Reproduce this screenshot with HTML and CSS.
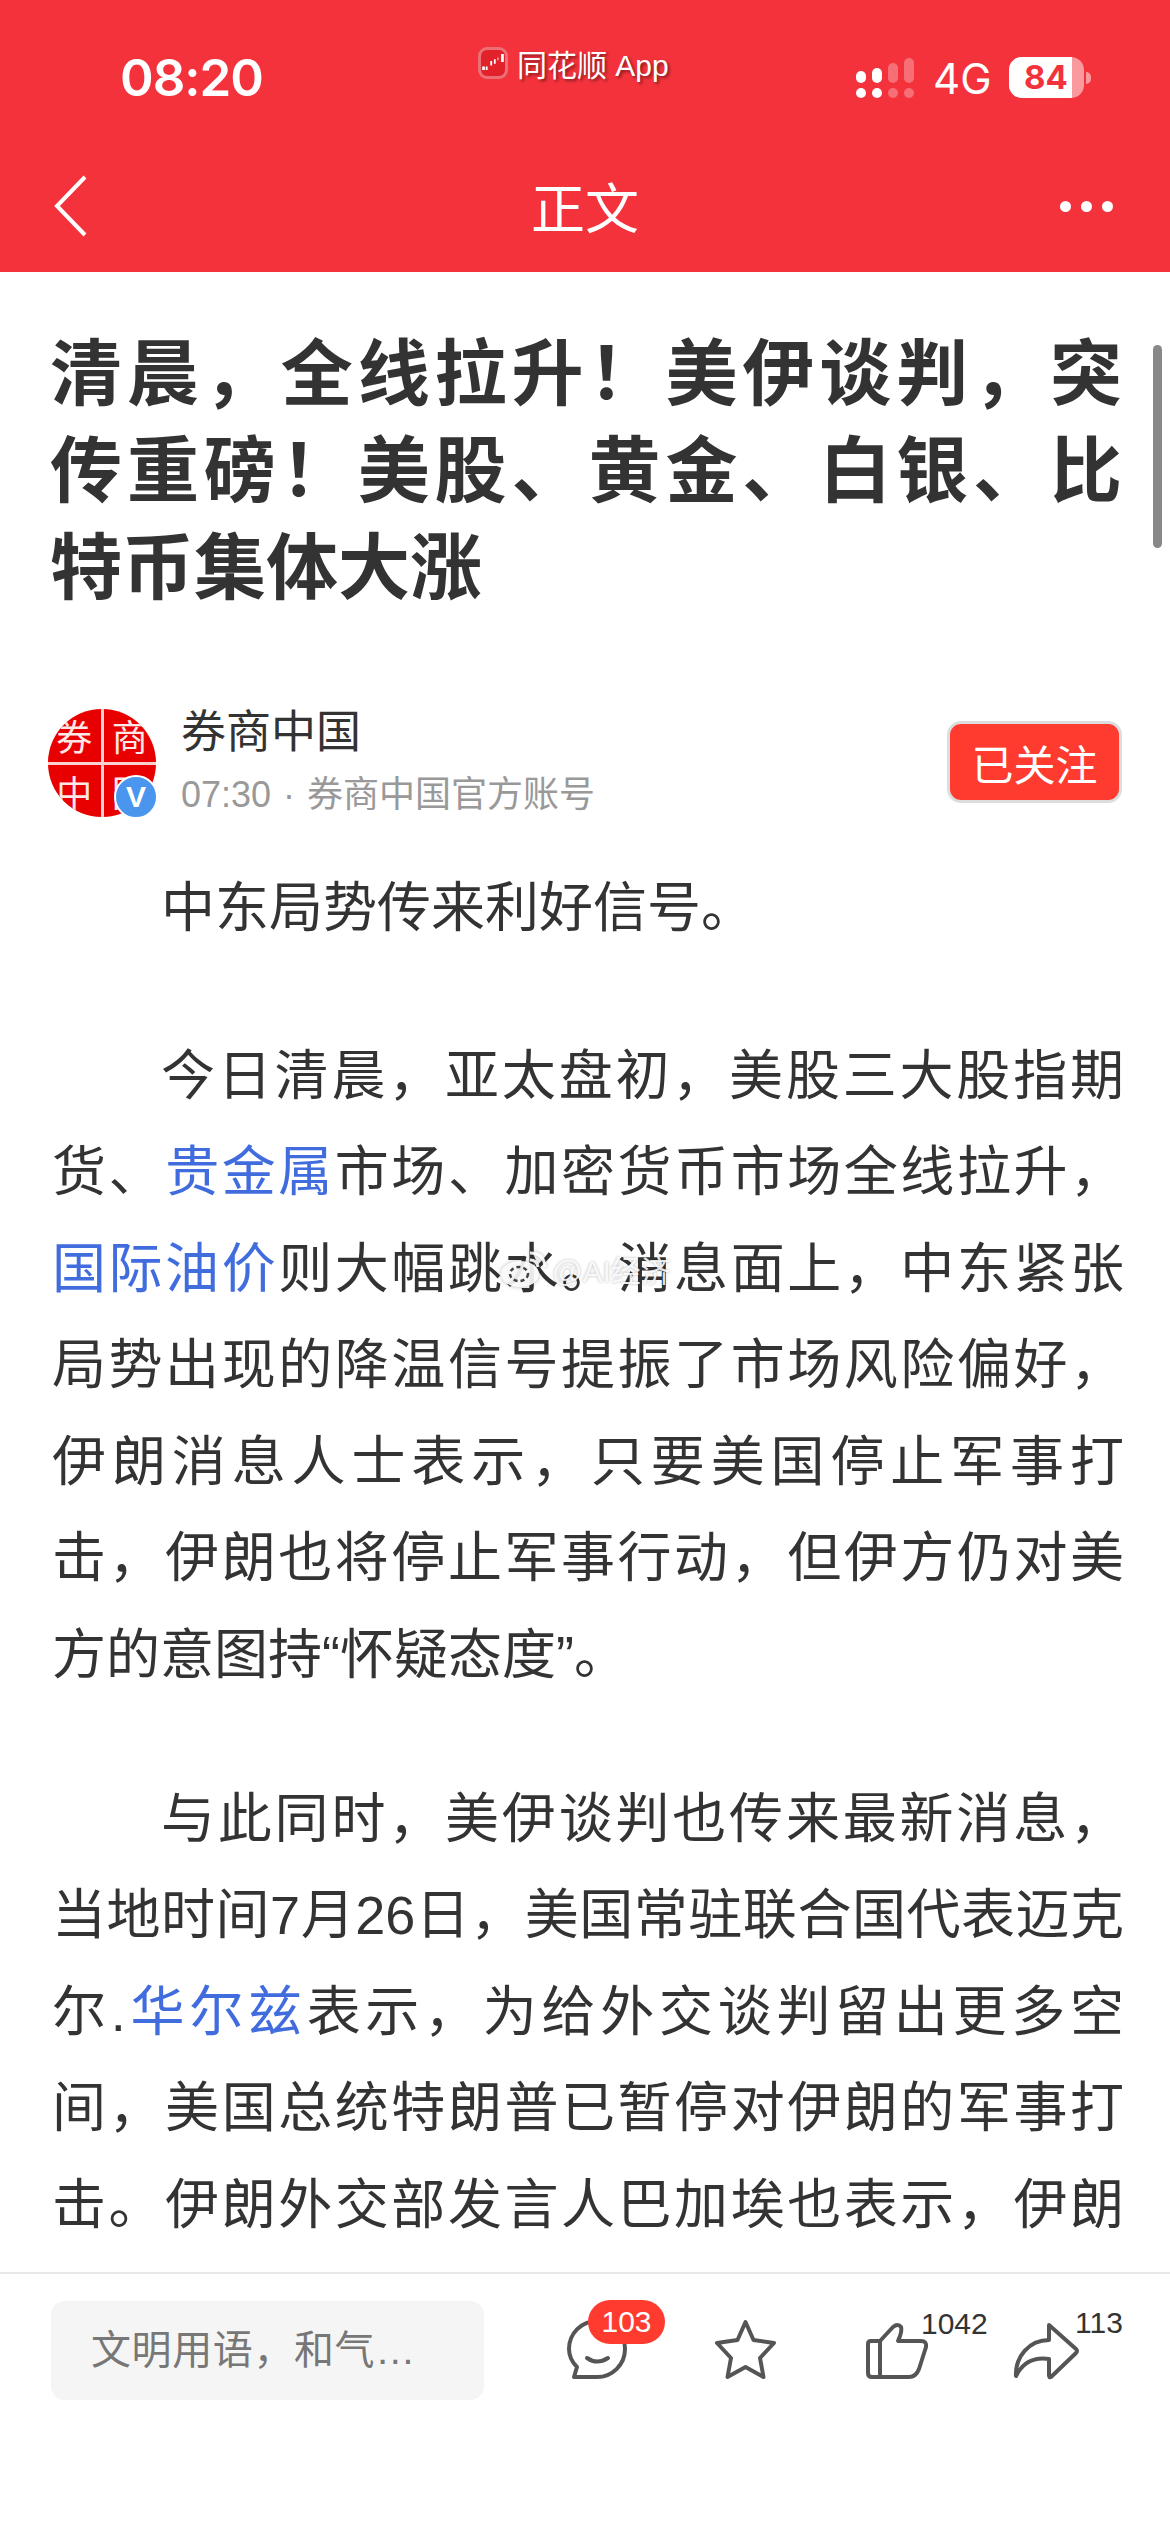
FILE: index.html
```html
<!DOCTYPE html>
<html lang="zh-CN">

<head>
    <meta charset="UTF-8">
    <meta name="viewport" content="width=device-width, initial-scale=1.0">
    <title>正文</title>
    <link rel="stylesheet" href="styles.css">
</head>

<body>
    <div id="page">
        <div id="header">
            <div id="status">
                <div id="time">08:20</div>
                <div id="source">
                    <div class="appicon">
                        <svg width="26" height="20" viewBox="0 0 26 20">
                            <path d="M1 15h3v4H1zM5 15h2v4H5zM10 9h2v5h-2zM14 7h2v5h-2zM18 5h1v3h-1zM22 1h3v9h-3z" fill="#fff"/>
                        </svg>
                    </div>
                    <span>同花顺 App</span>
                </div>
                <div id="signal">
                    <div class="bar"><i class="top t1"></i><i class="dot"></i></div>
                    <div class="bar"><i class="top t2"></i><i class="dot"></i></div>
                    <div class="bar off"><i class="top t3"></i><i class="dot"></i></div>
                    <div class="bar off"><i class="top t4"></i><i class="dot"></i></div>
                </div>
                <div id="net">4G</div>
                <div id="battery">
                    <div id="batteryfill">84</div>
                </div>
                <div id="batterynub"></div>
            </div>
            <div id="nav">
                <svg class="back" width="34" height="64" viewBox="0 0 34 64">
                    <path d="M31 3 L3 32 L31 61" fill="none" stroke="#fff" stroke-width="4"/>
                </svg>
                <div id="navtitle">正文</div>
                <div id="more"><i></i><i></i><i></i></div>
            </div>
        </div>

        <div id="article">
            <h1>清晨，全线拉升！美伊谈判，突传重磅！美股、黄金、白银、比特币集体大涨</h1>

            <div id="author">
                <div class="avatarwrap">
                    <div class="avatar">
                        <span>券</span><span>商</span><span>中</span><span>国</span>
                    </div>
                    <div class="vbadge">V</div>
                </div>
                <div class="authorinfo">
                    <p class="authorname">券商中国</p>
                    <p class="authormeta">07:30 · 券商中国官方账号</p>
                </div>
                <div class="flexgrow"></div>
                <button id="follow">已关注</button>
            </div>

            <div id="content">
                <p>中东局势传来利好信号。</p>
                <p>今日清晨，亚太盘初，美股三大股指期货、<a href="#">贵金属</a>市场、加密货币市场全线拉升，<a href="#">国际油价</a>则大幅跳水。消息面上，中东紧张局势出现的降温信号提振了市场风险偏好，伊朗消息人士表示，只要美国停止军事打击，伊朗也将停止军事行动，但伊方仍对美方的意图持“怀疑态度”。</p>
                <p>与此同时，美伊谈判也传来最新消息，当地时间7月26日，美国常驻联合国代表迈克尔.<a href="#">华尔兹</a>表示，为给外交谈判留出更多空间，美国总统特朗普已暂停对伊朗的军事打击。伊朗外交部发言人巴加埃也表示，伊朗方面将继续通过相关渠道与美方保持沟通。</p>
            </div>

            <div id="scrollbar"></div>
            <div id="watermark">
                <svg width="50" height="38" viewBox="0 0 50 38">
                    <ellipse cx="20" cy="24" rx="19" ry="13" fill="#fff" fill-opacity=".9"/>
                    <ellipse cx="19" cy="24" rx="9" ry="7" fill="none" stroke="#444" stroke-width="2.5" stroke-dasharray="4 3"/>
                    <path d="M30 3 Q44 3 45 17 M30 10 Q37 10 38 17" fill="none" stroke="#fff" stroke-opacity=".9" stroke-width="3"/>
                </svg>
                <span>@AI经济</span>
            </div>
        </div>

        <div id="bottom">
            <div id="comment">文明用语，和气…</div>
            <div class="tools">
                <div class="tool tool-comment">
                    <svg width="60" height="60" viewBox="0 0 60 60">
                        <path d="M30 2 A28 28 0 0 0 2 30 C2 37 5 43 10 48 L7 58 H30 A28 28 0 0 0 58 30 A28 28 0 0 0 30 2 Z"/>
                        <path d="M20 39 Q30 46 41 39"/>
                    </svg>
                    <div class="redcount">103</div>
                </div>
                <div class="tool tool-star">
                    <svg width="63" height="60" viewBox="0 0 63 60">
                        <path d="M31.5 3 L39.5 21 L60 24 L46 39 L49.5 58 L31.5 48 L13.5 58 L17 39 L3 24 L23.5 21 Z"/>
                    </svg>
                </div>
                <div class="tool tool-like">
                    <svg width="63" height="56" viewBox="0 0 63 56">
                        <path d="M6 18 H15 L28 4 Q33 0 36 4 Q37 7 35 13 L33 18 H56 Q62 18 61 24 L54 46 Q51 54 44 54 H7 Q3 54 3 50 V21 Q3 18 6 18 Z M15 18 V54"/>
                    </svg>
                    <div class="count">1042</div>
                </div>
                <div class="tool tool-share">
                    <svg width="66" height="57" viewBox="0 0 66 57">
                        <path d="M36 3 L63 27 Q65 29 63 31 L38 55 Q36 56 36 53 V37 C22 35 10 40 3 54 C2 35 16 18 36 18 Z"/>
                    </svg>
                    <div class="count">113</div>
                </div>
            </div>
        </div>
    </div>
</body>

</html>
```

FILE: styles.css
```css
html,
body {
    margin: 0;
    background: #fff;
    font-family: "Liberation Sans", "Noto Sans CJK SC", sans-serif;
}

p {
    margin: 0;
}

a {
    color: #416cde;
    text-decoration: none;
}

#page {
    width: 1170px;
    height: 2532px;
    display: flex;
    flex-direction: column;
    overflow: hidden;
}

#header {
    background: #f4323c;
    color: #fff;
    height: 272px;
    flex-shrink: 0;
}

#status {
    display: flex;
    height: 146px;
    padding-left: 120px;
    box-sizing: border-box;
}

#time {
    font-family: "Inter", sans-serif;
    font-weight: 600;
    font-size: 51px;
    line-height: 52px;
    width: 143px;
    margin-top: 52px;
    white-space: nowrap;
    letter-spacing: -1px;
}

#source {
    display: flex;
    align-items: center;
    width: 187px;
    height: 32px;
    margin-top: 47px;
    margin-left: 215px;
    font-size: 30px;
    white-space: nowrap;
    text-shadow: 2px 2px 3px rgba(0, 0, 0, .45);
}

#source span {
    margin-left: 9px;
}

.appicon {
    width: 30px;
    height: 32px;
    box-sizing: border-box;
    border: 3px solid rgba(255, 255, 255, .35);
    border-radius: 9px;
    background: #e2222b;
    flex-shrink: 0;
}

.appicon svg {
    display: block;
    width: 24px;
    height: 18px;
    margin-top: 3px;
}

#signal {
    display: flex;
    gap: 6px;
    height: 41px;
    margin-top: 57px;
    margin-left: 191px;
}

.bar {
    width: 10px;
    display: flex;
    flex-direction: column;
    justify-content: flex-end;
    gap: 5px;
}

.bar i {
    display: block;
    background: #fff;
    border-radius: 5px;
}

.bar.off i {
    background: rgba(255, 255, 255, .3);
}

.dot {
    height: 10px;
}

.t1 {
    height: 12px;
}

.t2 {
    height: 15px;
}

.t3 {
    height: 20px;
}

.t4 {
    height: 25px;
}

#net {
    font-family: "Inter", sans-serif;
    font-size: 42px;
    line-height: 42px;
    margin-top: 58px;
    margin-left: 19px;
    width: 55px;
    white-space: nowrap;
}

#battery {
    width: 75px;
    height: 41px;
    margin-top: 57px;
    margin-left: 21px;
    background: rgba(255, 255, 255, .5);
    border-radius: 13px;
    overflow: hidden;
}

#batteryfill {
    width: 63px;
    height: 41px;
    box-sizing: border-box;
    padding-left: 15px;
    background: #fff;
    color: #f4323c;
    font-family: "Inter", sans-serif;
    font-weight: 700;
    font-size: 33px;
    line-height: 41px;
}

#batterynub {
    width: 5px;
    height: 12px;
    margin-top: 72px;
    margin-left: 2px;
    background: rgba(255, 255, 255, .5);
    border-radius: 0 6px 6px 0;
}

#nav {
    display: flex;
    align-items: center;
    justify-content: space-between;
    height: 120px;
    padding: 0 57px 0 54px;
}

.back {
    display: block;
}

#navtitle {
    font-family: "Noto Sans CJK SC", sans-serif;
    font-size: 54px;
    line-height: 120px;
    width: 108px;
    margin-left: 22px;
}

#more {
    display: flex;
    gap: 10px;
}

#more i {
    display: block;
    width: 11px;
    height: 11px;
    background: #fff;
    border-radius: 50%;
}

#article {
    flex: 1;
    min-height: 0;
    overflow: hidden;
    position: relative;
    padding: 47px 48px 0 50px;
}

h1 {
    margin: 0;
    font-family: "Noto Sans CJK SC", sans-serif;
    font-weight: 600;
    font-size: 72px;
    line-height: 97px;
    color: #333;
    text-align: justify;
}

#author {
    display: flex;
    align-items: flex-start;
    margin-top: 99px;
    margin-left: -2px;
}

.avatarwrap {
    position: relative;
    width: 108px;
    height: 108px;
    flex-shrink: 0;
}

.avatar {
    width: 108px;
    height: 108px;
    border-radius: 50%;
    overflow: hidden;
    background: #fbd0d0;
    display: grid;
    grid-template-columns: 1fr 1fr;
    grid-template-rows: 1fr 1fr;
    gap: 3px;
}

.avatar span {
    background: #e80000;
    color: #fde8e8;
    font-family: "Noto Sans CJK SC", sans-serif;
    font-size: 36px;
    line-height: 52px;
    text-align: center;
}

.vbadge {
    position: absolute;
    left: 66px;
    top: 66px;
    width: 40px;
    height: 40px;
    border: 2px solid #fff;
    border-radius: 50%;
    background: #4a96ee;
    color: #fff;
    font-size: 30px;
    font-weight: 700;
    line-height: 40px;
    text-align: center;
}

.authorinfo {
    margin-left: 25px;
}

.authorname {
    font-family: "Noto Sans CJK SC", sans-serif;
    font-size: 45px;
    line-height: 46px;
    color: #333;
    margin-top: -3px;
}

.authormeta {
    font-size: 36px;
    line-height: 46px;
    color: #999;
    margin-top: 20px;
    white-space: nowrap;
    word-spacing: 2px;
}

.flexgrow {
    flex-grow: 9999;
}

#follow {
    width: 175px;
    height: 82px;
    margin-top: 12px;
    padding: 0;
    box-sizing: border-box;
    border: 3px solid #ddd;
    border-radius: 14px;
    background: #ff3b30;
    color: #fff;
    font-family: "Noto Sans CJK SC", sans-serif;
    font-size: 42px;
}

#content {
    margin-top: 42px;
    margin-left: 2px;
    margin-right: -2px;
}

#content p {
    font-size: 54px;
    line-height: 96.5px;
    color: #333;
    text-align: justify;
    text-indent: 109px;
    margin-bottom: 67.5px;
}

#content p:first-child {
    margin-bottom: 71px;
}

#scrollbar {
    position: absolute;
    right: 8px;
    top: 73px;
    width: 9px;
    height: 203px;
    border-radius: 5px;
    background: #888;
}

#watermark {
    position: absolute;
    left: 500px;
    top: 975px;
    display: flex;
    align-items: center;
    gap: 2px;
    font-size: 30px;
    color: rgba(255, 255, 255, .9);
    text-shadow: 0 0 3px rgba(0, 0, 0, .3);
    white-space: nowrap;
}

#watermark svg {
    filter: drop-shadow(0 0 2px rgba(0, 0, 0, .3));
}

#bottom {
    height: 260px;
    flex-shrink: 0;
    box-sizing: border-box;
    border-top: 2px solid #e8e8e8;
    background: #fff;
    display: flex;
    align-items: flex-start;
    padding: 27px 0 0 51px;
}

#comment {
    width: 433px;
    height: 99px;
    box-sizing: border-box;
    padding-left: 40px;
    background: #f5f5f5;
    border-radius: 14px;
    color: #777;
    font-size: 40px;
    line-height: 99px;
    letter-spacing: .6px;
    white-space: nowrap;
}

.tools {
    display: flex;
    align-items: flex-end;
    height: 78px;
}

.tool {
    position: relative;
}

.tool svg {
    display: block;
    overflow: visible;
}

.tool svg path {
    fill: none;
    stroke: #555;
    stroke-width: 4;
    stroke-linejoin: round;
    stroke-linecap: round;
}

.tool-comment {
    margin-left: 83px;
}

.tool-star {
    margin-left: 87px;
}

.tool-like {
    margin-left: 88px;
}

.tool-share {
    margin-left: 85px;
}

.redcount {
    position: absolute;
    left: 21px;
    top: -19px;
    width: 77px;
    height: 44px;
    border-radius: 22px;
    background: #ff3b30;
    color: #fff;
    font-size: 30px;
    line-height: 44px;
    text-align: center;
}

.count {
    position: absolute;
    left: 56px;
    top: -16px;
    font-size: 30px;
    line-height: 34px;
    color: #333;
}

.tool-share .count {
    left: 62px;
}
```
